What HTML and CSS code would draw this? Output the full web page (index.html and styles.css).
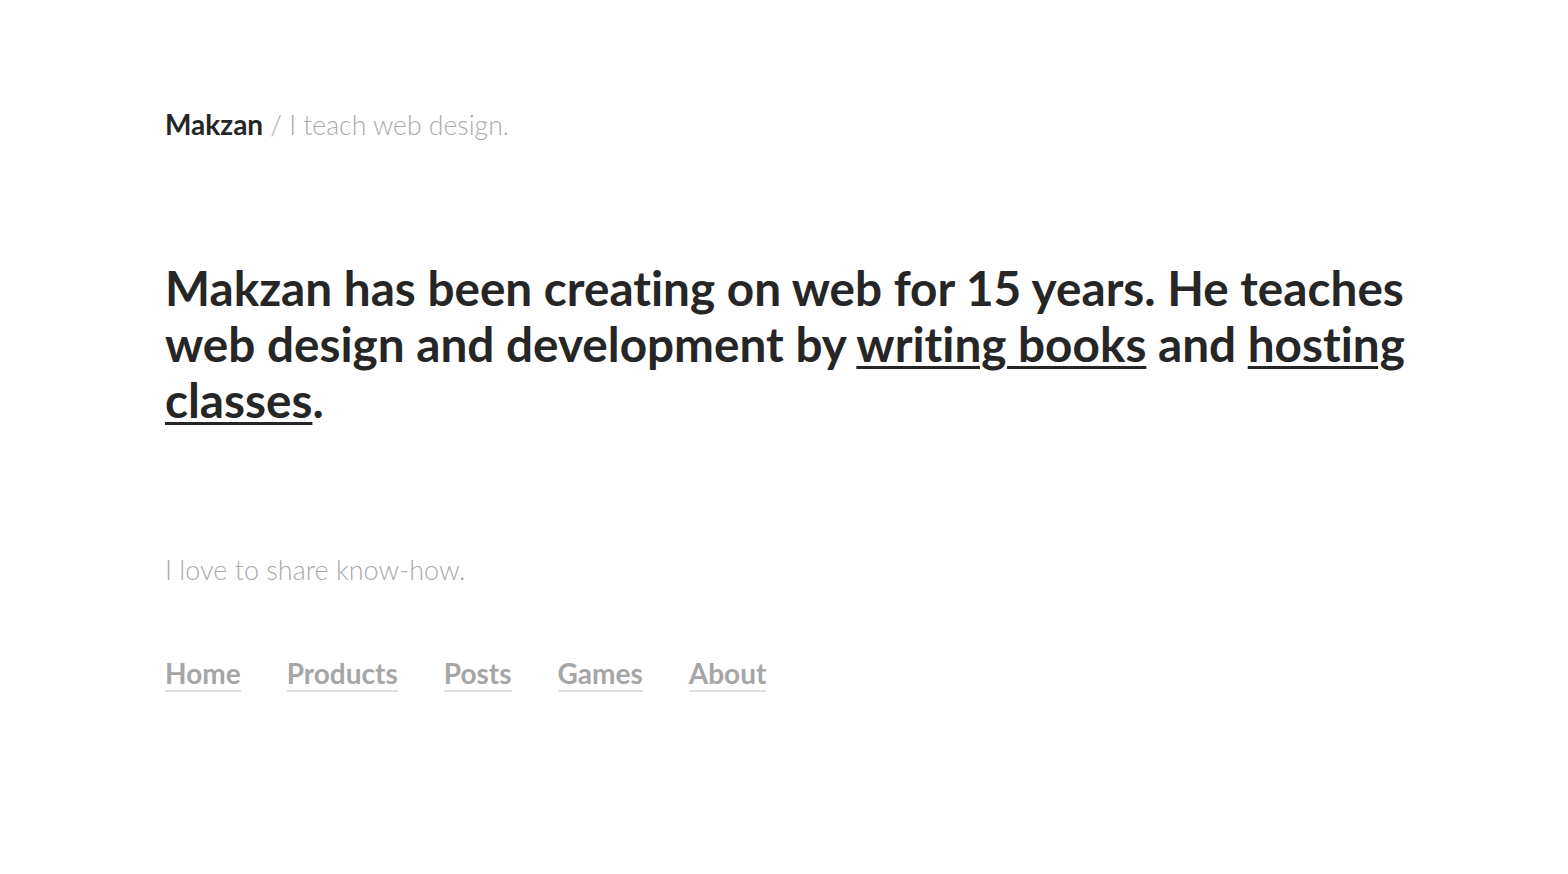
FILE: index.html
```html
<!DOCTYPE html>
<html lang="en">
<head>
<meta charset="utf-8">
<title>Makzan</title>
<link rel="stylesheet" href="styles.css">
</head>
<body>
<div class="page">
  <header class="site-header">
    <span class="brand">Makzan</span><span class="tagline"> / I teach web design.</span>
  </header>
  <main>
    <h1 class="intro">Makzan has been creating on web for 15 years. He teaches web design and development by <a href="#">writing books</a> and <a href="#">hosting classes</a>.</h1>
    <p class="share">I love to share know-how.</p>
    <nav class="nav">
      <a href="#">Home</a>
      <a href="#">Products</a>
      <a href="#">Posts</a>
      <a href="#">Games</a>
      <a href="#">About</a>
    </nav>
  </main>
</div>
</body>
</html>
```

FILE: styles.css
```css
html, body {
  margin: 0;
  padding: 0;
  background: #fff;
}
body {
  font-family: Lato, "Open Sans", sans-serif;
  color: #262626;
  font-variant-ligatures: none;
}
.page {
  padding: 106px 0 0 165px;
  width: 1270px;
}
.site-header {
  font-size: 28px;
  line-height: 36px;
}
.brand {
  font-weight: 700;
  color: #262626;
}
.tagline {
  font-size: 26.6px;
  font-weight: 300;
  color: #aaa;
}
.intro {
  margin: 117px 0 0;
  font-size: 47.7px;
  line-height: 56px;
  font-weight: 700;
  color: #262626;
}
.intro a {
  color: #262626;
  text-decoration: underline;
  text-decoration-thickness: 3px;
  text-underline-offset: 4px;
}
.share {
  margin: 124px 0 0;
  font-size: 27px;
  line-height: 36px;
  font-weight: 300;
  color: #aaa;
}
.nav {
  margin-top: 69px;
  display: flex;
  gap: 46px;
}
.nav a {
  font-size: 28px;
  line-height: 33px;
  font-weight: 700;
  color: #a6a6a6;
  text-decoration: none;
  border-bottom: 2px solid #e0e0e0;
}
```
